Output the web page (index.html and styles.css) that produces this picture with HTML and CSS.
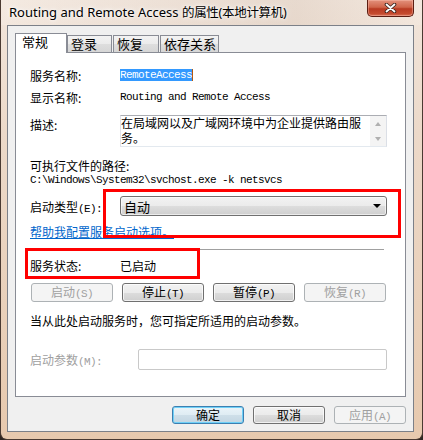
FILE: index.html
```html
<!DOCTYPE html>
<html lang="zh-CN">
<head>
    <meta charset="UTF-8">
    <meta name="viewport" content="width=device-width, initial-scale=1.0">
    <title>Routing and Remote Access 的属性(本地计算机)</title>
    <link rel="stylesheet" href="styles.css">
</head>
<body>
    <div class="frame">
        <!-- Title bar -->
        <div class="titlebar">
            <span class="title">Routing and Remote Access <span class="title-cjk">的属性(本地计算机)</span></span>
            <div class="close">
                <svg width="13" height="10" viewBox="0 0 13 10">
                    <path d="M2.5 1.5 L10.5 8.5 M10.5 1.5 L2.5 8.5" stroke="#3b2620" stroke-width="3.6" stroke-linecap="round" fill="none"/>
                    <path d="M2.5 1.5 L10.5 8.5 M10.5 1.5 L2.5 8.5" stroke="#ffffff" stroke-width="1.8" stroke-linecap="round" fill="none"/>
                </svg>
            </div>
        </div>

        <div class="client">
            <div class="tabs">
                <div class="tab active">常规</div>
                <div class="tab t-login">登录</div>
                <div class="tab t-recover">恢复</div>
                <div class="tab t-deps">依存关系</div>
            </div>

            <div class="pane">
                <div class="row r-name">
                    <span class="label">服务名称:</span>
                    <span class="mono selected">RemoteAccess</span>
                </div>
                <div class="row r-display">
                    <span class="label">显示名称:</span>
                    <span class="mono">Routing and Remote Access</span>
                </div>
                <div class="row r-desc">
                    <span class="label desc-label">描述:</span>
                    <div class="textbox">
                        <div class="textbox-text">在局域网以及广域网环境中为企业提供路由服务。</div>
                        <div class="scrollbar">
                            <span class="arrow up"></span>
                            <span class="arrow down"></span>
                        </div>
                    </div>
                </div>
                <div class="r-path-label">可执行文件的路径:</div>
                <div class="r-path mono">C:\Windows\System32\svchost.exe -k netsvcs</div>
                <div class="row r-type">
                    <span class="label">启动类型<span class="mono">(E):</span></span>
                    <div class="combo">
                        <span>自动</span>
                        <span class="combo-arrow"></span>
                    </div>
                </div>
                <a class="r-link" href="#">帮助我配置服务启动选项。</a>
                <div class="separator"></div>
                <div class="row r-status">
                    <span class="label">服务状态:</span>
                    <span>已启动</span>
                </div>
                <div class="r-buttons">
                    <button class="btn wide" disabled>启动<span class="mono">(S)</span></button>
                    <button class="btn wide">停止<span class="mono">(T)</span></button>
                    <button class="btn wide">暂停<span class="mono">(P)</span></button>
                    <button class="btn wide" disabled>恢复<span class="mono">(R)</span></button>
                </div>
                <div class="r-hint">当从此处启动服务时，您可指定所适用的启动参数。</div>
                <div class="row r-params">
                    <span class="label params-label">启动参数<span class="mono">(M):</span></span>
                    <div class="params-input"></div>
                </div>
            </div>

            <div class="footer">
                <button class="btn default">确定</button>
                <button class="btn">取消</button>
                <button class="btn" disabled>应用<span class="mono">(A)</span></button>
            </div>
        </div>
    </div>

    <!-- red highlight boxes drawn over the dialog -->
    <div class="mark mark-type"></div>
    <div class="mark mark-status"></div>
</body>
</html>
```

FILE: styles.css
```css
* {
    box-sizing: border-box;
}
body {
    margin: 0;
    width: 423px;
    height: 440px;
    overflow: hidden;
    position: relative;
    background-color: #2e2622;
    font-family: "Noto Sans CJK SC", sans-serif;
    font-size: 12px;
    color: #000;
}
.frame {
    display: flex;
    flex-direction: column;
    height: 440px;
    border: 1px solid #4a3a32;
    border-top: none;
    border-radius: 0 0 7px 7px;
    background: linear-gradient(#f2e6dc 0%, #ecd9c9 30%, #e7c9ae 100%);
}
.titlebar {
    height: 25px;
    position: relative;
    padding-left: 8px;
    background: linear-gradient(90deg, rgba(255,255,255,0.15), rgba(200,180,165,0.25) 70%, rgba(255,255,255,0.1));
}
.title {
    font-family: "Noto Sans", "Noto Sans CJK SC", sans-serif;
    font-size: 13px;
    line-height: 24px;
    color: #000;
    text-shadow: 0 0 6px #fff, 0 0 3px #fff;
}
.title-cjk {
    font-size: 12.5px;
    letter-spacing: -0.3px;
}
.close {
    position: absolute;
    top: 0;
    right: 8px;
    width: 47px;
    height: 17px;
    border: 1px solid #5c1d12;
    border-top: none;
    border-radius: 0 0 5px 5px;
    background: linear-gradient(#e3917c 0%, #d0654b 45%, #b83a22 55%, #c44a2e 85%, #d9735a 100%);
    box-shadow: inset 0 0 0 1px rgba(255, 200, 185, 0.4);
    display: flex;
    align-items: center;
    justify-content: center;
}

.client {
    flex: 1;
    margin: 0 8px 7px 6px;
    border: 1px solid #7c8088;
    background-color: #f0f0f0;
    padding: 7px 0 0 7px;
}

/* Tabs */
.tabs {
    display: flex;
    align-items: flex-end;
    height: 19px;
    position: relative;
    z-index: 1;
}
.tab {
    height: 17px;
    border: 1px solid #898c95;
    border-bottom: none;
    background: linear-gradient(#f3f3f3, #ebebeb 50%, #dedede 50%, #d6d6d6);
    font-size: 13px;
    line-height: 16px;
    padding-left: 3px;
}
.tab.active {
    width: 52px;
    height: 20px;
    margin-bottom: -1px;
    background: #fff;
    padding-left: 6px;
    line-height: 16px;
}
.t-login { width: 45px; }
.t-recover { width: 46px; margin-left: 1px; }
.t-deps { width: 59px; margin-left: 1px; }

.pane {
    width: 391px;
    height: 345px;
    border: 1px solid #898c95;
    background-color: #fff;
    padding: 14px 0 0 14px;
}
.row {
    display: flex;
    align-items: center;
}
.label {
    width: 90px;
    flex-shrink: 0;
}
.mono {
    font-family: "Liberation Mono", monospace;
    font-size: 11px;
    letter-spacing: -0.6px;
}
.r-name, .r-display {
    height: 16px;
}
.r-display {
    margin-top: 6px;
}
.selected {
    background-color: #3399ff;
    color: #fff;
    line-height: 12px;
    height: 12px;
    border-right: 1px solid #b4590f;
}
.r-desc {
    margin-top: 10px;
    align-items: flex-start;
}
.desc-label {
    padding-top: 2px;
    line-height: 16px;
}
.textbox {
    width: 267px;
    height: 32px;
    border: 1px solid #abadb3;
    border-color: #abadb3 #dbdfe6 #e3e9ef #e2e3ea;
    display: flex;
    overflow: hidden;
}
.textbox-text {
    flex: 1;
    font-size: 12px;
    line-height: 15px;
    margin-top: -1px;
}
.scrollbar {
    width: 16px;
    flex-shrink: 0;
    background-color: #f4f4f4;
    display: flex;
    flex-direction: column;
    align-items: center;
    justify-content: center;
    gap: 11px;
}
.arrow {
    width: 0;
    height: 0;
    border-left: 3.5px solid transparent;
    border-right: 3.5px solid transparent;
}
.arrow.up { border-bottom: 4px solid #b0b0b0; }
.arrow.down { border-top: 4px solid #b0b0b0; }

.r-path-label {
    margin-top: 11px;
    line-height: 15px;
}
.r-path {
    line-height: 14px;
}
.r-type {
    margin-top: 9px;
}
.combo {
    width: 267px;
    height: 20px;
    border: 1px solid #707070;
    border-radius: 3px;
    background: linear-gradient(#f2f2f2, #ebebeb 50%, #dddddd 50%, #cfcfcf);
    box-shadow: inset 0 0 0 1px rgba(255, 255, 255, 0.6);
    display: flex;
    align-items: center;
    justify-content: space-between;
    padding: 0 5px 0 3px;
    font-size: 13px;
}
.combo-arrow {
    width: 0;
    height: 0;
    border-left: 4px solid transparent;
    border-right: 4px solid transparent;
    border-top: 4px solid #000;
}
.r-link {
    display: inline-block;
    margin-top: 8px;
    line-height: 16px;
    color: #0066cc;
    text-decoration: underline;
}
.separator {
    width: 354px;
    margin-top: 9px;
    border-top: 1px solid #a0a0a0;
}
.r-status {
    margin-top: 7px;
    height: 16px;
}
.r-buttons {
    display: flex;
    gap: 9px;
    margin: 10px 0 0 1px;
}
.btn {
    width: 72px;
    height: 19px;
    padding: 0;
    border: 1px solid #707070;
    border-radius: 3px;
    background: linear-gradient(#f2f2f2, #ebebeb 50%, #dddddd 50%, #cfcfcf);
    box-shadow: inset 0 0 0 1px rgba(255, 255, 255, 0.7);
    font-family: "Noto Sans CJK SC", sans-serif;
    font-size: 12px;
    line-height: 16px;
    color: #000;
}
.btn.wide {
    width: 82px;
}
.btn:disabled {
    border-color: #adb2b5;
    background: #f4f4f4;
    box-shadow: none;
    color: #a0a0a0;
}
.btn.default {
    border-color: #3c7fb1;
    box-shadow: inset 0 0 0 1px #6fd0f7;
    background: linear-gradient(#eaf4f9, #dfecf3 50%, #cfdfe9 50%, #c3d6e2);
}
.r-hint {
    margin-top: 11px;
    line-height: 16px;
}
.r-params {
    margin-top: 20px;
}
.params-label {
    width: 108px;
    color: #a0a0a0;
}
.params-input {
    width: 249px;
    height: 21px;
    border: 1px solid #c9c9c9;
    border-radius: 2px;
    background-color: #fff;
}

.footer {
    width: 391px;
    display: flex;
    justify-content: flex-end;
    gap: 9px;
    margin-top: 9px;
}
.footer .btn {
    height: 18px;
}

/* red annotation boxes */
.mark {
    position: absolute;
    border: 3px solid #ff0000;
}
.mark-type {
    left: 103px;
    top: 189px;
    width: 298px;
    height: 49px;
}
.mark-status {
    left: 25px;
    top: 248px;
    width: 175px;
    height: 31px;
}
```
